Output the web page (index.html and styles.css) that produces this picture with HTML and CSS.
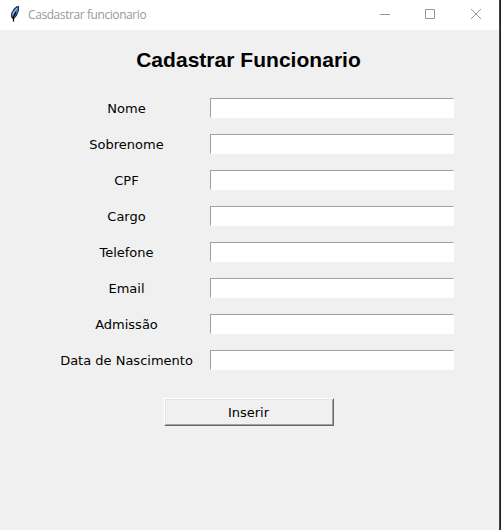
FILE: index.html
```html
<!DOCTYPE html>
<html lang="pt-BR">
<head>
<meta charset="utf-8">
<title>Casdastrar funcionario</title>
<link rel="stylesheet" href="styles.css">
</head>
<body>
<div class="window">
  <header class="titlebar">
    <svg class="feather" width="14" height="18" viewBox="0 0 14 18">
      <path d="M3.5 14 2 12 2 8.5 4.5 4 7.5 1.2 10 1 10 5.5 8 10.5 5.5 13.5Z" fill="#2a2f38"/>
      <path d="M3 11.5 3.2 8.5 5.5 4.8 8 2.5 9 2.4 9 5.5 7.2 9.8 5 12.5Z" fill="#3f7fd6"/>
      <path d="M3.6 9.5 5.5 6 8 3" fill="none" stroke="#a9cdf2" stroke-width="1"/>
      <path d="M4.5 16.5V12L7 7" fill="none" stroke="#000" stroke-width="1.2"/>
    </svg>
    <span class="caption">Casdastrar funcionario</span>
    <div class="controls">
      <svg width="10" height="10" viewBox="0 0 10 10"><path d="M0 5.5H10"/></svg>
      <svg width="10" height="10" viewBox="0 0 10 10"><path d="M.5.5H9.5V9.5H.5Z"/></svg>
      <svg class="close" width="10" height="10" viewBox="0 0 10 10"><path d="M0 0 10 10M10 0 0 10"/></svg>
    </div>
  </header>
  <main class="content">
    <h1>Cadastrar Funcionario</h1>
    <form class="fields">
      <label for="nome">Nome</label><input id="nome" type="text">
      <label for="sobrenome">Sobrenome</label><input id="sobrenome" type="text">
      <label for="cpf">CPF</label><input id="cpf" type="text">
      <label for="cargo">Cargo</label><input id="cargo" type="text">
      <label for="telefone">Telefone</label><input id="telefone" type="text">
      <label for="email">Email</label><input id="email" type="text">
      <label for="admissao">Admissão</label><input id="admissao" type="text">
      <label for="nascimento">Data de Nascimento</label><input id="nascimento" type="text">
    </form>
    <button class="submit" type="button"><span>Inserir</span></button>
  </main>
</div>
</body>
</html>
```
FILE: styles.css
```css
* { box-sizing: border-box; }
body {
  margin: 0;
  background: #1e1f22;
  overflow: hidden;
}
.window {
  width: 500px;
  height: 530px;
  border-right: 1px solid #444547;
  background: #f0f0f0;
  display: flex;
  flex-direction: column;
}
.titlebar {
  height: 30px;
  background: #fff;
  display: flex;
  align-items: center;
  padding: 0 18px 0 9px;
}
.feather { display: block; margin-top: -2px; }
.caption {
  margin-left: 5px;
  font: 12px/16px "Open Sans", sans-serif;
  letter-spacing: -0.42px;
  color: #999;
}
.controls {
  margin-left: auto;
  display: flex;
  gap: 35px;
  margin-top: -2px;
}
.controls svg {
  display: block;
  fill: none;
  stroke: #999;
  stroke-width: 1;
}
.controls .close { margin-left: 1px; }
.content {
  display: flex;
  flex-direction: column;
  align-items: center;
  width: 497px;
}
h1 {
  margin: 18px 0 26px;
  font: bold 21px/24px "Liberation Sans", Arial, sans-serif;
  letter-spacing: 0.03px;
  color: #000;
}
.fields {
  align-self: flex-start;
  margin-left: 43px;
  display: grid;
  grid-template-columns: 167px 244px;
  grid-auto-rows: 20px;
  row-gap: 16px;
}
.fields label {
  padding-top: 1px;
  text-align: center;
  font: 13px/20px Verdana, "DejaVu Sans", sans-serif;
  color: #000;
}
.fields input {
  width: 244px;
  height: 20px;
  padding: 0 2px;
  border: 1px solid;
  border-color: #a0a0a0 #fff #fff #a0a0a0;
  border-radius: 0;
  background: #fff;
  outline: none;
}
.submit {
  width: 170px;
  height: 28px;
  margin: 28px 0 0;
  padding: 0;
  border: 1px solid;
  border-color: #fff #696969 #696969 #fff;
  border-radius: 0;
  background: #f0f0f0;
  font: 13px/26px Verdana, "DejaVu Sans", sans-serif;
  color: #000;
}
.submit span {
  display: block;
  height: 26px;
  border: 1px solid;
  border-color: #e3e3e3 #a0a0a0 #a0a0a0 #e3e3e3;
}
```
